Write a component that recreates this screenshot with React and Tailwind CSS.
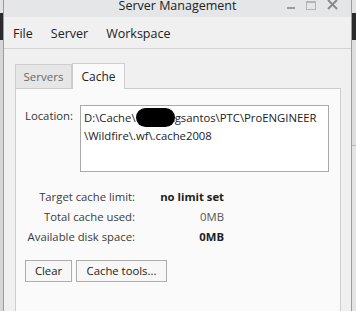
import React from "react";

const FONT = { fontFamily: '"Open Sans", "Noto Sans", sans-serif' };

function TitleBar() {
  return (
    <div className="relative flex h-[17px] items-start justify-center overflow-hidden bg-[#e4e6e7]">
      <span className="-mt-[3px] text-[12.5px] leading-[18px] text-[#222]">Server Management</span>
      <div className="absolute right-[13px] top-0 flex items-center gap-[11px]">
        <span className="mt-[6px] block h-[2px] w-[8px] bg-[#9a9a9a]" />
        <span className="block h-[9px] w-[10px] border border-t-[2px] border-[#b5b5b5]" />
        <svg width="11" height="11" viewBox="0 0 11 11" className="-mt-[1px]">
          <path d="M1 1L10 10M10 1L1 10" stroke="#8a8a8a" strokeWidth="2" />
        </svg>
      </div>
    </div>
  );
}

function MenuBar() {
  return (
    <div className="flex h-[32px] items-center gap-[18px] border-b border-[#d4d4d4] bg-[#f0f0f0] pl-[9px] pt-[3px] text-[12.5px] text-[#222]">
      <span>File</span>
      <span>Server</span>
      <span>Workspace</span>
    </div>
  );
}

function Tabs() {
  return (
    <div className="flex items-end pl-[11px] pt-[14px] text-[11.5px]">
      <div className="flex h-[24px] w-[57px] items-center justify-center border border-b-0 border-[#cdcdcd] bg-[#e6e6e6] text-[#6a6a6a]">
        Servers
      </div>
      <div className="relative -mb-px flex h-[26px] w-[53px] items-center justify-center border border-b-0 border-[#cdcdcd] bg-[#fafafa] pt-[1px] text-[12px] text-[#222]">
        Cache
      </div>
    </div>
  );
}

function Stat({ label, value, bold }) {
  return (
    <>
      <span className="whitespace-nowrap text-right text-[#3a3a3a]">{label}</span>
      <span className={`whitespace-nowrap text-right ${bold ? "font-bold text-[#222]" : "text-[#555]"}`}>{value}</span>
    </>
  );
}

function CachePanel() {
  return (
    <div className="ml-[11px] mr-[10px] flex-1 border border-b-0 border-[#cdcdcd] bg-[#fafafa] pl-[9px] pr-[10px] pt-[16px] text-[11.3px]">
      <div className="flex">
        <span className="w-[55px] pt-[3px] leading-[16px] text-[#333]">Location:</span>
        <div className="h-[67px] w-[249px] border border-[#a9a9a9] bg-white px-[3px] pt-[3px] leading-[16px] text-[#222]">
          <div className="whitespace-nowrap">
            D:\Cache\
            <span className="relative -mr-[4px] inline-block h-[19px] w-[39px] -translate-y-[1px] rounded-full bg-black align-middle" />
            \gsantos\PTC\ProENGINEER
          </div>
          <div>\Wildfire\.wf\.cache2008</div>
        </div>
      </div>
      <div className="mt-[15px] grid grid-cols-[110px_89px] leading-[20px]">
        <Stat label="Target cache limit:" value="no limit set" bold />
        <Stat label="Total cache used:" value="0MB" />
        <Stat label="Available disk space:" value="0MB" bold />
      </div>
      <div className="mt-[13px] flex gap-[4px]">
        <button className="h-[22px] w-[47px] border border-[#adadad] bg-[#f7f7f7] text-[#222]">Clear</button>
        <button className="h-[22px] w-[91px] border border-[#adadad] bg-[#f7f7f7] text-[#222]">Cache tools...</button>
      </div>
    </div>
  );
}

export default function App() {
  return (
    <div className="flex h-[311px] w-[356px] overflow-hidden bg-[#dcdcdc]" style={FONT}>
      {/* backdrop strip, left */}
      <div className="flex w-[3px] flex-col">
        <div className="h-[13px] bg-[#e2e2e2]" />
        <div className="h-[27px] bg-[#2a2a2a]" />
        <div className="flex-1 bg-[#d6d6d6]" />
      </div>

      {/* window */}
      <div className="flex w-[349px] flex-col border-x border-[#9c9c9c] bg-[#f0f0f0]">
        <TitleBar />
        <MenuBar />
        <Tabs />
        <CachePanel />
      </div>

      {/* backdrop strip, right */}
      <div className="flex w-[4px] flex-col">
        <div className="h-[13px] bg-[#e2e2e2]" />
        <div className="h-[27px] bg-[#2a2a2a]" />
        <div className="h-[106px] border-b border-[#b8b8b8] bg-[#dedede]" />
        <div className="flex-1 bg-[#e4e4e4]" />
      </div>
    </div>
  );
}
